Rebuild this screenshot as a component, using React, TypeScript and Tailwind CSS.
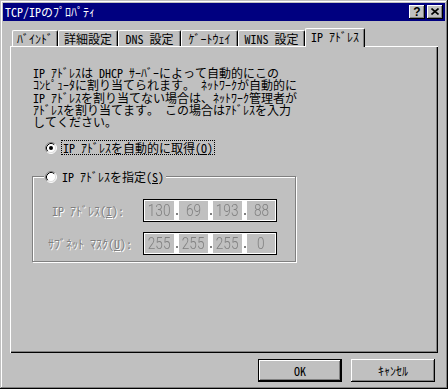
import React, { Fragment } from 'react';

const raised = 'shadow-[inset_-1px_-1px_0_#000,inset_1px_1px_0_#fff,inset_-2px_-2px_0_#808080]';

function Radio({ checked }: { checked?: boolean }) {
    return (
        <svg width="12" height="12" viewBox="0 0 12 12" className="shrink-0">
            <circle cx="6" cy="6" r="5" fill="#fff" />
            <path d="M2.11 9.89A5.5 5.5 0 0 1 9.89 2.11" stroke="#808080" fill="none" />
            <path d="M9.89 2.11A5.5 5.5 0 0 1 2.11 9.89" stroke="#fff" fill="none" />
            <path d="M2.82 9.18A4.5 4.5 0 0 1 9.18 2.82" stroke="#000" fill="none" />
            <path d="M9.18 2.82A4.5 4.5 0 0 1 2.82 9.18" stroke="#dfdfdf" fill="none" />
            {checked && <circle cx="6" cy="6" r="2" fill="#000" />}
        </svg>
    );
}

type TabProps = { label: string; className: string; active?: boolean };

const Tab: React.FC<TabProps> = ({ label, className, active }) => {
    if (active) {
        return (
            <div
                className={`relative z-10 -mb-px flex h-[19px] items-center justify-center rounded-t-[2px] border-l border-t border-r border-white border-r-black bg-[#c0c0c0] pb-[2px] whitespace-pre shadow-[inset_-1px_0_0_#808080] ${className}`}
            >
                {label}
            </div>
        );
    }
    return (
        <div
            className={`flex h-[16px] items-center justify-center rounded-t-[2px] border-l border-t border-r border-white border-r-black whitespace-pre shadow-[inset_-1px_0_0_#808080] ${className}`}
        >
            {label}
        </div>
    );
};

function IpField({ parts }: { parts: string[] }) {
    return (
        <div className="flex h-[23px] w-[134px] shrink-0 border border-black bg-white p-px">
            {parts.map((p, i) => (
                <Fragment key={i}>
                    {i > 0 && (
                        <div className="flex w-[5px] items-end justify-center pb-[5px]">
                            <div className="h-[2px] w-[2px] bg-[#808080]" />
                        </div>
                    )}
                    <div
                        className={`flex h-full items-center justify-center bg-[#c0c0c0] ${i === 3 ? 'w-[28px]' : 'w-[29px]'}`}
                    >
                        <div className="scale-x-80 text-[17px] leading-none font-light text-[#808080] [font-family:Roboto,'Liberation_Sans',sans-serif]">
                            {p}
                        </div>
                    </div>
                </Fragment>
            ))}
        </div>
    );
}

export default function App() {
    return (
        <div className="flex h-[389px] w-[448px] flex-col bg-[#c0c0c0] p-[3px] text-[12px] leading-[12px] text-black shadow-[inset_-1px_-1px_0_#000,inset_1px_1px_0_#c0c0c0,inset_-2px_-2px_0_#808080,inset_2px_2px_0_#fff] [font-family:'Noto_Sans_Mono_CJK_JP','Noto_Sans_CJK_JP',sans-serif]">
            {/* title bar */}
            <div className="flex h-[18px] shrink-0 items-center justify-between bg-[#000080] pl-[2px] pr-[2px]">
                <span className="text-white">TCP/IPのﾌﾟﾛﾊﾟﾃｨ</span>
                <div className="flex gap-[2px]">
                    <div className={`flex h-[14px] w-[16px] items-center justify-center bg-[#c0c0c0] pb-px text-[12px] font-bold [font-family:'Liberation_Sans',sans-serif] ${raised}`}>
                        ?
                    </div>
                    <div className={`flex h-[14px] w-[16px] items-center justify-center bg-[#c0c0c0] pb-px ${raised}`}>
                        <svg width="8" height="7" viewBox="0 0 8 7">
                            <path d="M0.5 0.5L7.5 6.5M7.5 0.5L0.5 6.5" stroke="#000" strokeWidth="1.6" />
                        </svg>
                    </div>
                </div>
            </div>

            {/* tabs */}
            <div className="ml-[9px] mt-[7px] flex h-[18px] shrink-0 items-end">
                <Tab label="ﾊﾞｲﾝﾄﾞ" className="w-[46px]" />
                <Tab label="詳細設定" className="w-[60px]" />
                <Tab label="DNS 設定" className="w-[63px]" />
                <Tab label="ｹﾞｰﾄｳｪｲ" className="w-[57px]" />
                <Tab label="WINS 設定" className="w-[67px]" />
                <Tab label="IP ｱﾄﾞﾚｽ" className="w-[60px]" active />
            </div>

            {/* panel */}
            <div className="ml-[7px] flex h-[307px] w-[428px] shrink-0 flex-col border-l border-t border-white shadow-[inset_-1px_-1px_0_#000,inset_-2px_-2px_0_#808080]">
                <p className="ml-[22px] mt-[20px] whitespace-pre leading-[12.25px]">
                    IP ｱﾄﾞﾚｽは DHCP ｻｰﾊﾞｰによって自動的にこの{'\n'}
                    ｺﾝﾋﾟｭｰﾀに割り当てられます。 ﾈｯﾄﾜｰｸが自動的に{'\n'}
                    IP ｱﾄﾞﾚｽを割り当てない場合は、ﾈｯﾄﾜｰｸ管理者が{'\n'}
                    ｱﾄﾞﾚｽを割り当てます。 この場合はｱﾄﾞﾚｽを入力{'\n'}
                    してください。
                </p>

                <div className="ml-[34px] mt-[12px] flex h-[15px] items-center gap-[4px]">
                    <Radio checked />
                    <span className="flex h-[15px] items-center whitespace-pre border border-dotted border-black px-px">
                        IP ｱﾄﾞﾚｽを自動的に取得(<span className="underline">O</span>)
                    </span>
                </div>

                <div className="relative ml-[21px] mt-[21px] h-[86px] w-[264px] border border-[#808080] shadow-[inset_1px_1px_0_#fff,1px_1px_0_#fff]">
                    <div className="absolute -top-[7px] left-[11px] flex h-[13px] items-center gap-[5px] bg-[#c0c0c0] pl-px pr-[2px]">
                        <Radio />
                        <span className="whitespace-pre">
                            IP ｱﾄﾞﾚｽを指定(<span className="underline">S</span>)
                        </span>
                    </div>

                    <div className="flex flex-col gap-[10px] pt-[22px]">
                        <div className="flex items-center">
                            <div className="w-[110px] whitespace-pre pl-[19px] text-[#808080] [text-shadow:1px_1px_0_#fff]">
                                IP ｱﾄﾞﾚｽ(<span className="underline">I</span>):
                            </div>
                            <IpField parts={['130', '69', '193', '88']} />
                        </div>
                        <div className="flex items-center">
                            <div className="w-[110px] whitespace-pre pl-[15px] text-[#808080] [text-shadow:1px_1px_0_#fff]">
                                ｻﾌﾞﾈｯﾄ ﾏｽｸ(<span className="underline">U</span>):
                            </div>
                            <IpField parts={['255', '255', '255', '0']} />
                        </div>
                    </div>
                </div>
            </div>

            {/* buttons */}
            <div className="mt-[6px] flex justify-end gap-[9px] pr-[10px]">
                <button className="flex h-[23px] w-[84px] items-center justify-center bg-[#c0c0c0] shadow-[inset_0_0_0_1px_#000,inset_-2px_-2px_0_#000,inset_2px_2px_0_#fff,inset_-3px_-3px_0_#808080]">
                    OK
                </button>
                <button className={`flex h-[23px] w-[84px] items-center justify-center bg-[#c0c0c0] ${raised}`}>
                    ｷｬﾝｾﾙ
                </button>
            </div>
        </div>
    );
}
